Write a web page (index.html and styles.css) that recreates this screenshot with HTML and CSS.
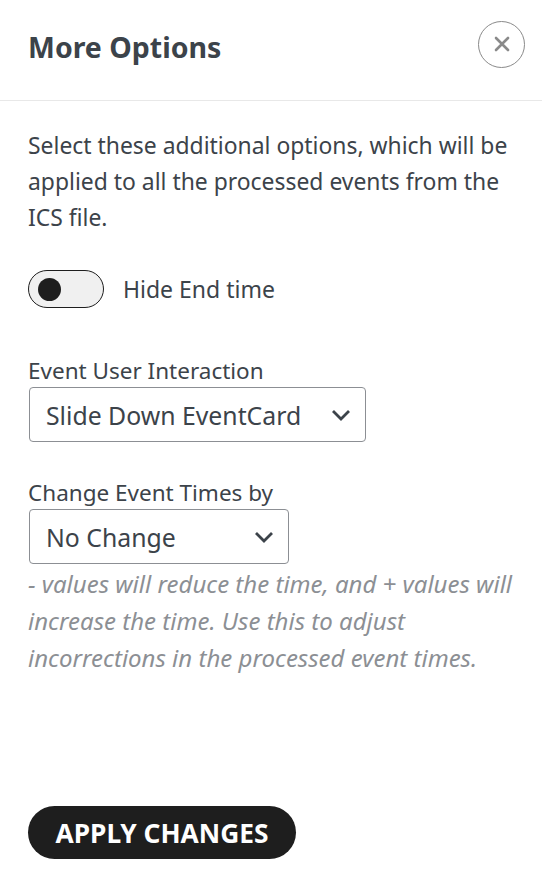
FILE: index.html
```html
<!DOCTYPE html>
<html>
<head>
<meta charset="utf-8">
<link rel="stylesheet" href="styles.css">
</head>
<body>
<div class="panel">
  <header class="header">
    <h1 class="title">More Options</h1>
    <button class="close" aria-label="Close">
      <svg width="16" height="16" viewBox="0 0 16 16"><path d="M2 2L14 14M14 2L2 14" stroke="#8a8a8a" stroke-width="2.6" stroke-linecap="round"/></svg>
    </button>
  </header>
  <main class="content">
    <p class="intro">Select these additional options, which will be applied to all the processed events from the ICS file.</p>
    <label class="toggle-row">
      <span class="toggle"><span class="knob"></span></span>
      <span class="toggle-label">Hide End time</span>
    </label>
    <div class="field">
      <div class="field-label">Event User Interaction</div>
      <div class="select wide">
        <span>Slide Down EventCard</span>
        <svg class="chev" width="20" height="12" viewBox="0 0 20 12"><path d="M2 2L10 10L18 2" fill="none" stroke="#3c434a" stroke-width="2.8"/></svg>
      </div>
    </div>
    <div class="field">
      <div class="field-label">Change Event Times by</div>
      <div class="select narrow">
        <span>No Change</span>
        <svg class="chev" width="20" height="12" viewBox="0 0 20 12"><path d="M2 2L10 10L18 2" fill="none" stroke="#3c434a" stroke-width="2.8"/></svg>
      </div>
      <p class="help">- values will reduce the time, and + values will increase the time. Use this to adjust incorrections in the processed event times.</p>
    </div>
  </main>
  <div class="footer">
    <button class="apply">APPLY CHANGES</button>
  </div>
</div>
</body>
</html>
```

FILE: styles.css
```css
html, body {
  margin: 0;
  padding: 0;
  background: #ffffff;
}
body {
  font-family: "Noto Sans", "Open Sans", sans-serif;
  color: #3c434a;
}
.panel {
  width: 542px;
  height: 887px;
  display: flex;
  flex-direction: column;
}
.header {
  height: 101px;
  border-bottom: 1px solid #e8e8e8;
  display: flex;
  align-items: center;
  justify-content: space-between;
  padding: 0 17px 0 28px;
  box-sizing: border-box;
}
.title {
  margin: 0;
  font-size: 28.5px;
  font-weight: 700;
  color: #3c434a;
  position: relative;
  top: -3px;
}
.close {
  width: 47px;
  height: 47px;
  border-radius: 50%;
  border: 1px solid #8a8a8a;
  background: #fff;
  display: flex;
  align-items: center;
  justify-content: center;
  padding: 0;
  position: relative;
  top: -6px;
}
.content {
  padding: 27px 28px 0 28px;
  flex: 1;
}
.intro {
  margin: 0;
  font-size: 22.9px;
  line-height: 36px;
}
.toggle-row {
  display: flex;
  align-items: center;
  gap: 19px;
  margin-top: 34px;
}
.toggle {
  width: 76px;
  height: 38px;
  box-sizing: border-box;
  border: 1px solid #1e1e1e;
  border-radius: 19px;
  background: #f0f0f0;
  display: flex;
  align-items: center;
  padding-left: 9px;
}
.knob {
  width: 23px;
  height: 23px;
  border-radius: 50%;
  background: #1e1e1e;
}
.toggle-label {
  font-size: 23px;
}
.field {
  margin-top: 47px;
}
.field + .field {
  margin-top: 35px;
}
.field-label {
  font-size: 22.5px;
  line-height: 32px;
}
.select {
  height: 55px;
  box-sizing: border-box;
  border: 1px solid #8c8f94;
  border-radius: 4px;
  display: flex;
  align-items: center;
  justify-content: space-between;
  padding: 0 14px 0 16px;
  font-size: 24.8px;
  margin-left: 1px;
}
.select.wide { width: 337px; }
.select.narrow { width: 260px; }
.help {
  margin: 1px -12px 0 0;
  font-size: 24px;
  font-style: italic;
  line-height: 37px;
  color: #8c8f94;
}
.footer {
  padding: 0 28px 28px 28px;
}
.apply {
  height: 53px;
  width: 268px;
  border: none;
  border-radius: 27px;
  background: #1e1e1e;
  color: #ffffff;
  font-family: "Noto Sans", "Open Sans", sans-serif;
  font-weight: 700;
  font-size: 26.3px;
  padding: 0;
}
```
